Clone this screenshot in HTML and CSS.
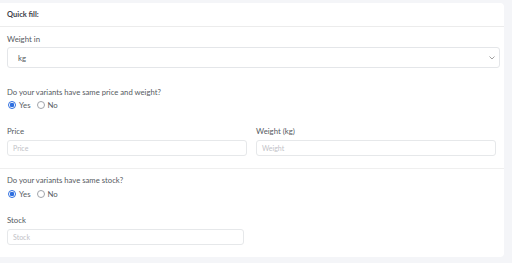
FILE: index.html
```html
<!DOCTYPE html>
<html>
<head>
<meta charset="utf-8">
<link rel="stylesheet" href="styles.css">
</head>
<body>
<div class="card">
  <div class="card-header">Quick fill:</div>
  <div class="section">
    <label class="label">Weight in</label>
    <div class="select">
      <span>kg</span>
      <svg class="chev" width="6" height="4" viewBox="0 0 6 4"><path d="M0.5 0.5 L3 3 L5.5 0.5" fill="none" stroke="#a0a0a0" stroke-width="1"/></svg>
    </div>
    <div class="question">Do your variants have same price and weight?</div>
    <div class="radios">
      <span class="radio checked"></span><span class="rlabel">Yes</span>
      <span class="radio"></span><span class="rlabel">No</span>
    </div>
    <div class="row">
      <div class="col">
        <label class="label">Price</label>
        <div class="input">Price</div>
      </div>
      <div class="col">
        <label class="label">Weight (kg)</label>
        <div class="input">Weight</div>
      </div>
    </div>
  </div>
  <div class="section second">
    <div class="question">Do your variants have same stock?</div>
    <div class="radios">
      <span class="radio checked"></span><span class="rlabel">Yes</span>
      <span class="radio"></span><span class="rlabel">No</span>
    </div>
    <label class="label">Stock</label>
    <div class="input stock">Stock</div>
  </div>
</div>
</body>
</html>
```

FILE: styles.css
```css
html, body {
  margin: 0;
  padding: 0;
  background: #f4f5f8;
  font-family: Lato, "Noto Sans", sans-serif;
  color: #555a61;
}
.card {
  margin-top: 3px;
  width: 504px;
  height: 254px;
  background: #fff;
  border-radius: 0 4px 4px 0;
  box-sizing: border-box;
}
.card-header {
  height: 24px;
  line-height: 24px;
  padding-left: 7px;
  font-size: 7.5px;
  font-weight: 700;
  color: #3c4047;
  border-bottom: 1px solid #ececec;
  box-sizing: border-box;
}
.section {
  padding: 7px 8px 0 7px;
  border-bottom: 1px solid #efefef;
  height: 142px;
  box-sizing: border-box;
}
.section.second {
  border-bottom: none;
  height: auto;
  padding-top: 6px;
}
.label {
  display: block;
  font-size: 7.8px;
  line-height: 10px;
  height: 10px;
}
.select {
  margin-top: 3px;
  width: 493px;
  height: 21px;
  border: 1px solid #e4e6e9;
  border-radius: 3px;
  box-sizing: border-box;
  display: flex;
  align-items: center;
  justify-content: space-between;
  padding: 0 4px 0 10px;
  font-size: 7.8px;
}
.chev { display: block; }
.question {
  margin-top: 19px;
  font-size: 7.7px;
  line-height: 10px;
  height: 10px;
}
.second .question { margin-top: 0; }
.radios {
  margin-top: 3px;
  display: flex;
  align-items: center;
  height: 10px;
  font-size: 7.8px;
}
.second .radios { margin-top: 4px; }
.radio {
  width: 8px;
  height: 8px;
  border: 1px solid #a0a4aa;
  border-radius: 50%;
  box-sizing: border-box;
  margin-left: 1px;
}
.radio.checked {
  border-color: #2f6fe0;
  background: radial-gradient(circle, #2f6fe0 0 2px, #fff 2.5px);
}
.rlabel {
  margin-left: 3px;
  margin-right: 5px;
}
.row {
  margin-top: 16px;
  display: flex;
  gap: 9px;
  width: 489px;
}
.col { width: 240px; }
.row .label, .second .label { margin-bottom: 4px; }
.second .label { margin-top: 16px; }
.input {
  width: 240px;
  height: 16px;
  border: 1px solid #e6e8ea;
  border-radius: 3px;
  box-sizing: border-box;
  padding-left: 5px;
  font-size: 7px;
  line-height: 14px;
  color: #bfc2c7;
}
.input.stock { width: 237px; }
```
